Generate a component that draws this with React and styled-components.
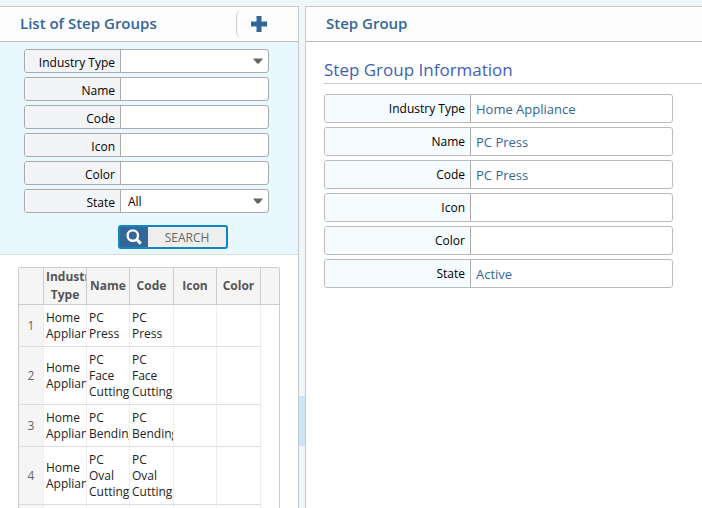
import React, { useState } from 'react';

import styled, { createGlobalStyle } from 'styled-components'


const STATES = ['All', 'Active', 'Inactive'];

const searchFields = [
  { name: 'industryType', title: 'Industry Type', options: ['', 'Home Appliance'] },
  { name: 'name', title: 'Name' },
  { name: 'code', title: 'Code' },
  { name: 'icon', title: 'Icon' },
  { name: 'color', title: 'Color' },
  { name: 'state', title: 'State', options: STATES },
];

const stepGroups = [
  { industryType: 'Home Appliance', name: 'PC Press', code: 'PC Press', icon: '', color: '', state: 'Active' },
  { industryType: 'Home Appliance', name: 'PC Face Cutting', code: 'PC Face Cutting', icon: '', color: '', state: 'Active' },
  { industryType: 'Home Appliance', name: 'PC Bending', code: 'PC Bending', icon: '', color: '', state: 'Active' },
  { industryType: 'Home Appliance', name: 'PC Oval Cutting', code: 'PC Oval Cutting', icon: '', color: '', state: 'Active' },
];

const columns = ['industryType', 'name', 'code', 'icon', 'color'];

const SearchForm = () => {
  const [params, setParams] = useState({ state: 'All' });

  const onChange = (e) => {
    setParams({ ...params, [e.target.name]: e.target.value })
  }

  return (
    <Search onSubmit={(e) => e.preventDefault()}>
      {
        searchFields.map(({ name, title, options }) => (
          <SearchField key={name}>
            <label htmlFor={`search-${name}`}>{title}</label>
            {
              options ?
                <div className="select">
                  <select id={`search-${name}`} name={name} value={params[name] || ''} onChange={onChange}>
                    {options.map(option => <option key={option} value={option}>{option}</option>)}
                  </select>
                  <svg width="10" height="6" viewBox="0 0 10 6"><path d="M0 0.5h10L6 5.5H4z" fill="#666" /></svg>
                </div>
                : <input id={`search-${name}`} name={name} type="text" value={params[name] || ''} onChange={onChange} />
            }
          </SearchField>
        ))
      }
      <SearchButton type="submit">
        <span className="icon">
          <svg width="16" height="16" viewBox="0 0 16 16" fill="none" stroke="#fff">
            <circle cx="6.8" cy="6.6" r="5.2" strokeWidth="2.4" />
            <path d="M10.6 10.4L14.8 14.6" strokeWidth="3" />
          </svg>
        </span>
        <span className="text">SEARCH</span>
      </SearchButton>
    </Search>
  )
};

const StepGroupTable = ({ onSelect }) => (
  <Table>
    <colgroup>
      <col width="25" />
      <col width="43" />
      <col width="43" />
      <col width="44" />
      <col width="43" />
      <col width="44" />
      <col />
    </colgroup>
    <thead>
      <tr>
        <th></th>
        <th>Industry Type</th>
        <th>Name</th>
        <th>Code</th>
        <th>Icon</th>
        <th>Color</th>
        <th></th>
      </tr>
    </thead>
    <tbody>
      {
        stepGroups.map((group, idx) => (
          <tr key={group.code} onClick={() => onSelect(idx)}>
            <td className="seq">{idx + 1}</td>
            {columns.map(column => <td key={column}>{group[column]}</td>)}
            <td className="rest"></td>
          </tr>
        ))
      }
      <tr>
        <td className="seq"></td>
        {columns.map(column => <td key={column}></td>)}
        <td className="rest"></td>
      </tr>
    </tbody>
  </Table>
);

const App = () => {
  const [selected, setSelected] = useState(0);
  const group = stepGroups[selected];

  return (
    <Page>
      <GlobalStyle />
      <ListPanel>
        <PanelHeader>
          <h2>List of Step Groups</h2>
          <AddButton type="button" aria-label="Add step group">
            <svg width="16" height="16" viewBox="0 0 16 16"><path d="M5.5 0h5v5.5H16v5h-5.5V16h-5v-5.5H0v-5h5.5z" fill="#336699" /></svg>
          </AddButton>
        </PanelHeader>
        <SearchForm />
        <StepGroupTable onSelect={setSelected} />
      </ListPanel>
      <Splitter><button type="button" aria-label="Collapse list"></button></Splitter>
      <DetailPanel>
        <PanelHeader>
          <h2>Step Group</h2>
        </PanelHeader>
        <Detail>
          <h3>Step Group Information</h3>
          <dl>
            {
              searchFields.map(({ name, title }) => (
                <DetailField key={name}>
                  <dt>{title}</dt>
                  <dd>{group[name]}</dd>
                </DetailField>
              ))
            }
          </dl>
        </Detail>
      </DetailPanel>
    </Page>
  )
};

const GlobalStyle = createGlobalStyle`
  * {
    box-sizing:border-box;
  }
  body {
    margin:0;
    background-color:#eff7fa;
  }
  body, button, input, select {
    font-family:"Segoe UI", "Open Sans", "Noto Sans", sans-serif;
  }
  h2, h3, dl, dd {
    margin:0;
  }
`
const Page = styled.div`
  display:flex;
  height:100vh;
  padding-top:6px;
  overflow:hidden;
`
const Panel = styled.section`
  background-color:#fff;
  border-top:1px solid #c8c8c8;
  overflow:hidden;
`
const ListPanel = styled(Panel)`
  flex:0 0 299px;
  border-right:1px solid #c8c8c8;
`
const DetailPanel = styled(Panel)`
  flex:1;
  min-width:0;
  border-left:1px solid #c8c8c8;
`
const PanelHeader = styled.header`
  display:flex;
  align-items:center;
  justify-content:space-between;
  height:35px;
  padding-left:20px;
  background-color:#fdfdfd;
  border-bottom:1px solid #bbb;
  h2 {
    padding-bottom:2px;
    font-size:15px;
    font-weight:600;
    line-height:20px;
    color:#336699;
  }
`
const AddButton = styled.button`
  display:flex;
  align-items:center;
  width:62px;
  height:28px;
  padding:0 0 0 14px;
  border:none;
  border-left:1px solid #ccc;
  border-radius:6px;
  background:none;
`
const Search = styled.form`
  display:flex;
  flex-direction:column;
  gap:4px;
  padding:7px 29px 5px 24px;
  background-color:#e9f7fe;
  border-bottom:1px solid #d8dcde;
`
const SearchField = styled.div`
  display:flex;
  height:24px;
  border:1px solid #aaa;
  border-radius:3px;
  background-color:#fff;
  overflow:hidden;
  label {
    flex:0 0 96px;
    padding:2px 5px 0 0;
    border-right:1px solid #aaa;
    background-color:#f3f4f6;
    font-size:12px;
    line-height:22px;
    text-align:right;
    color:#000;
  }
  input, select {
    flex:1;
    min-width:0;
    padding:0 7px;
    border:none;
    outline:none;
    background:none;
    font-size:12px;
    color:#000;
    appearance:none;
  }
  .select {
    display:flex;
    flex:1;
    align-items:center;
    padding-right:5px;
  }
`
const SearchButton = styled.button`
  display:flex;
  align-self:flex-end;
  width:110px;
  height:24px;
  margin:8px 41px 0 0;
  padding:0;
  border:2px solid #1187c1;
  border-radius:3px;
  background-color:#336699;
  overflow:hidden;
  .icon {
    display:flex;
    flex:0 0 28px;
    align-items:center;
    justify-content:center;
    height:20px;
  }
  .text {
    flex:1;
    height:20px;
    background-color:#eee;
    font-size:12px;
    line-height:22px;
    color:#666;
  }
`
const Table = styled.table`
  width:262px;
  margin:12px 0 0 18px;
  border:1px solid #ccc;
  border-radius:2px;
  border-spacing:0;
  table-layout:fixed;
  font-size:12px;
  line-height:16px;
  color:#222;
  th {
    height:37px;
    padding:0 2px;
    border-right:1px solid #ccc;
    border-bottom:1px solid #ccc;
    background-color:#f5f5f5;
    font-size:12px;
    font-weight:700;
    line-height:18px;
    color:#555;
    overflow:hidden;
    &:last-child {
      border-right:none;
    }
  }
  td {
    height:42px;
    padding:5px 0 4px 2px;
    border-right:1px solid #eee;
    border-bottom:1px solid #ddd;
    overflow:hidden;
    &.seq {
      padding-left:0;
      background-color:#f5f5f5;
      text-align:center;
      color:#666;
    }
    &.rest {
      border:none;
    }
  }
`
const Splitter = styled.div`
  flex:0 0 6px;
  button {
    display:block;
    width:6px;
    height:50px;
    margin-top:390px;
    padding:0;
    border:none;
    background-color:#c8e6f8;
  }
`
const Detail = styled.div`
  padding-left:18px;
  h3 {
    height:42px;
    padding-top:16px;
    border-bottom:1px solid #ccc;
    font-size:17px;
    font-weight:400;
    line-height:24px;
    color:#3f5fb5;
  }
  dl {
    display:flex;
    flex-direction:column;
    gap:4px;
    max-width:349px;
    padding-top:10px;
  }
`
const DetailField = styled.div`
  display:flex;
  height:29px;
  border:1px solid #bbb;
  border-radius:3px;
  overflow:hidden;
  dt {
    flex:0 0 146px;
    padding-right:5px;
    border-right:1px solid #aaa;
    background-color:#f5fbff;
    font-size:12px;
    line-height:27px;
    text-align:right;
    color:#000;
  }
  dd {
    padding:0 5px;
    font-size:13px;
    line-height:28px;
    color:#336699;
  }
`
export default App;
